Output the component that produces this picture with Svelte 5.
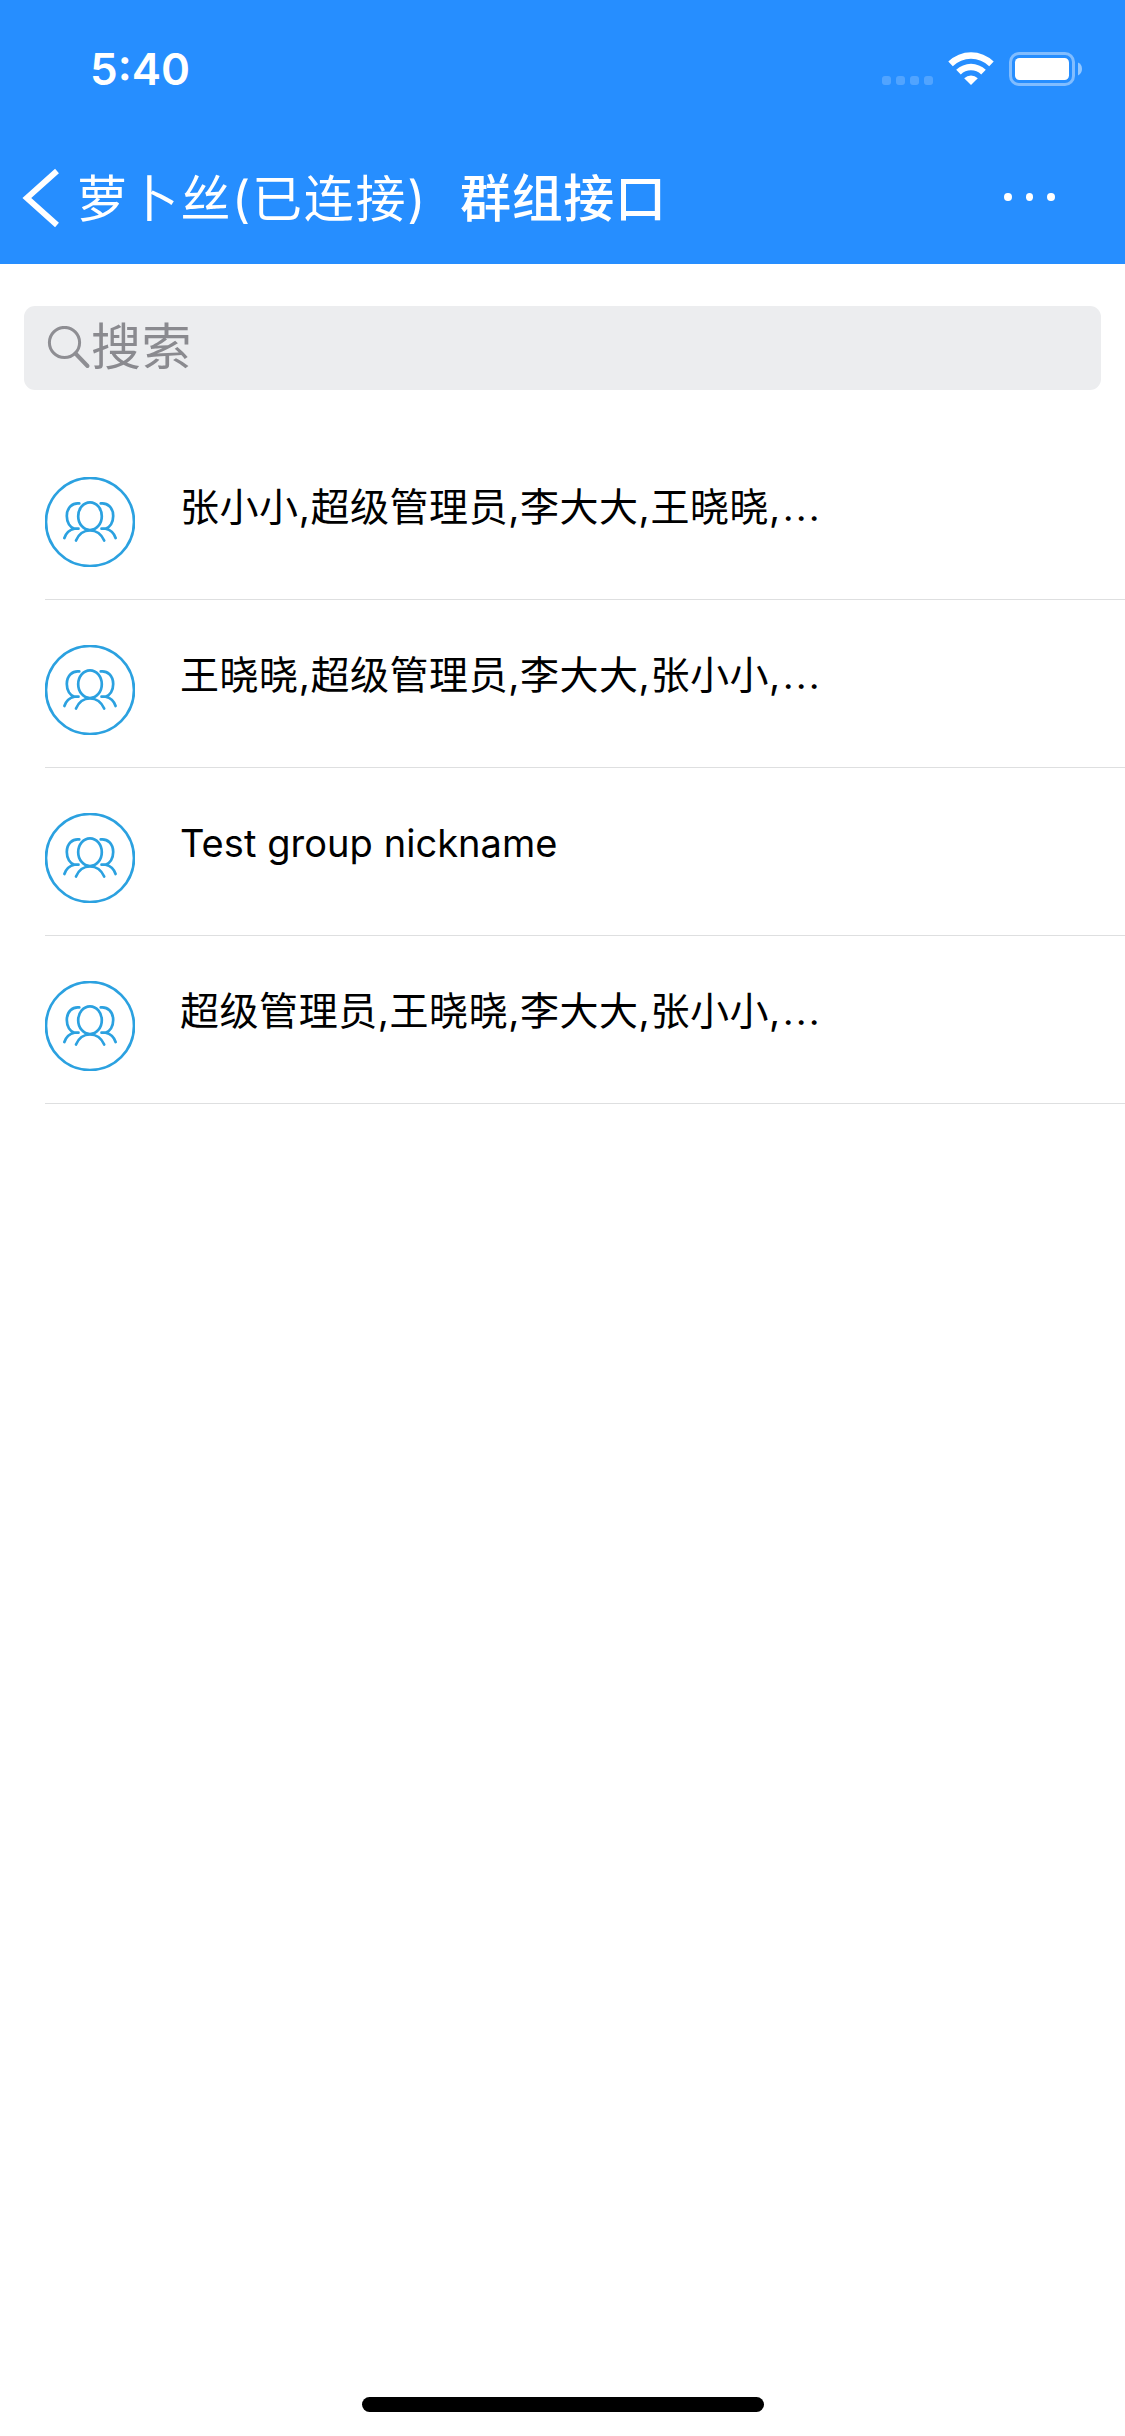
<script>
  const groups = [
    { name: '张小小,超级管理员,李大大,王晓晓,', clipped: true },
    { name: '王晓晓,超级管理员,李大大,张小小,', clipped: true },
    { name: 'Test group nickname', latin: true },
    { name: '超级管理员,王晓晓,李大大,张小小,', clipped: true }
  ];
</script>

<div class="screen">
  <header>
    <div class="status">
      <span class="time">5:40</span>
      <div class="indicators">
        <div class="cell"><i></i><i></i><i></i><i></i></div>
        <svg class="wifi" width="46" height="34" viewBox="0 0 46 34">
          <path d="M0.3 9.5A32.6 32.6 0 0 1 45.7 9.5L41.2 14.2A26 26 0 0 0 4.8 14.2Z" />
          <path d="M8.2 17.8A21.4 21.4 0 0 1 37.8 17.8L33.2 22.4A14.8 14.8 0 0 0 12.8 22.4Z" />
          <path d="M16.2 26.2A10.2 10.2 0 0 1 29.8 26.2L23 33Z" />
        </svg>
        <svg class="battery" width="74" height="34" viewBox="0 0 74 34">
          <rect x="1.5" y="1.5" width="63" height="31" rx="8.5" fill="none" stroke="#fff" stroke-opacity=".42" stroke-width="3" />
          <rect x="6" y="6" width="54" height="22" rx="4.5" fill="#fff" />
          <path d="M69 10.6Q73 12.5 73 17T69 23.4Z" fill="#fff" fill-opacity=".5" />
        </svg>
      </div>
    </div>
    <nav>
      <svg class="back" width="40" height="60" viewBox="0 0 40 60">
        <path d="M37 3L6.8 30L37 57" fill="none" stroke="#fff" stroke-width="5.8" />
      </svg>
      <span class="account">萝卜丝(已连接)</span>
      <h1>群组接口</h1>
      <div class="more"><i></i><i></i><i></i></div>
    </nav>
  </header>

  <div class="search">
    <svg width="44" height="44" viewBox="0 0 44 44">
      <circle cx="17.5" cy="16.5" r="15.1" />
      <path d="M28.5 27.5L40.5 40" stroke-width="4" stroke-linecap="round" />
    </svg>
    <span>搜索</span>
  </div>

  <ul>
    {#each groups as group}
      <li>
        <svg class="avatar" width="90" height="90" viewBox="0 0 90 90">
          <circle cx="45" cy="45" r="44" />
          <ellipse cx="45" cy="39.2" rx="11.8" ry="13.8" />
          <path d="M31 63.5C33.5 57.5 38.5 53.5 45 53.5S56.5 57.5 59.2 63.5" />
          <path d="M34.3 26.4C27.5 25.5 21.8 30.5 21.8 39C21.8 45.5 25 50.5 29.5 51.7H33.5M29.5 51.7C24.5 52.7 21 56 19.4 61" />
          <path d="M55.7 26.4C62.5 25.5 68.2 30.5 68.2 39C68.2 45.5 65 50.5 60.5 51.7H56.5M60.5 51.7C65.5 52.7 69 56 70.6 61" />
        </svg>
        <span class="name" class:latin={group.latin}>{group.name}{#if group.clipped}<span class="ellipsis">…</span>{/if}</span>
      </li>
    {/each}
  </ul>

  <div class="home"></div>
</div>

<style>
  :global(body) {
    margin: 0;
    background: #fff;
  }
  .screen {
    width: 1125px;
    height: 2436px;
    display: flex;
    flex-direction: column;
    background: #fff;
    font-family: Inter, "Noto Sans CJK SC", sans-serif;
  }
  header {
    height: 264px;
    background: #268eff;
    color: #fff;
  }
  .status {
    height: 132px;
    display: flex;
    justify-content: space-between;
    padding: 0 42px 0 90px;
    box-sizing: border-box;
  }
  .time {
    font-size: 44px;
    font-weight: 600;
    line-height: 54px;
    padding-top: 42px;
  }
  .indicators {
    display: flex;
    align-items: flex-start;
    padding-top: 52px;
  }
  .cell {
    display: flex;
    gap: 5px;
    padding: 24px 15px 0 0;
  }
  .cell i {
    width: 9px;
    height: 9px;
    border-radius: 3px;
    background: rgba(255, 255, 255, 0.2);
  }
  .wifi {
    fill: #fff;
    margin-right: 15px;
  }
  nav {
    height: 132px;
    display: flex;
    align-items: center;
    padding: 0 70px 0 20px;
  }
  .account {
    margin-left: 17px;
    padding-top: 1px;
    font-size: 50px;
    font-weight: 400;
    line-height: 60px;
    letter-spacing: 1.7px;
    white-space: nowrap;
  }
  h1 {
    margin: 0 0 0 33px;
    padding-top: 2px;
    font-size: 51px;
    font-weight: 500;
    line-height: 60px;
    letter-spacing: 0.6px;
    white-space: nowrap;
  }
  .more {
    display: flex;
    gap: 14px;
    margin-left: auto;
    padding-bottom: 2px;
  }
  .more i {
    width: 7.6px;
    height: 8px;
    border-radius: 50%;
    background: #fff;
  }
  .search {
    height: 84px;
    margin: 42px 24px;
    border-radius: 11px;
    background: #ecedef;
    color: #8a8a8f;
    display: flex;
    align-items: center;
    padding-left: 23px;
  }
  .search svg {
    fill: none;
    stroke: #8e8e93;
    stroke-width: 3;
  }
  .search span {
    font-size: 50px;
    font-weight: 400;
    line-height: 60px;
    letter-spacing: 0.6px;
    padding-bottom: 2px;
  }
  ul {
    list-style: none;
    margin: 0;
    padding: 0 0 0 45px;
  }
  li {
    height: 168px;
    box-sizing: border-box;
    border-bottom: 1px solid #dedfe0;
    display: flex;
    align-items: flex-start;
    gap: 45px;
    padding-top: 45px;
  }
  .avatar {
    fill: none;
    stroke: #2ba1e0;
    stroke-width: 2.7;
    stroke-linecap: round;
  }
  .name {
    font-size: 39px;
    font-weight: 400;
    line-height: 60px;
    letter-spacing: 0.55px;
    color: #000;
    white-space: nowrap;
  }
  .latin {
    font-size: 38px;
    letter-spacing: 0.05px;
  }
  .ellipsis {
    font-size: 46px;
    font-weight: 300;
    line-height: 1;
    margin-left: 1px;
  }
  .home {
    width: 402px;
    height: 15px;
    border-radius: 8px;
    background: #000;
    margin: auto auto 24px;
  }
</style>
